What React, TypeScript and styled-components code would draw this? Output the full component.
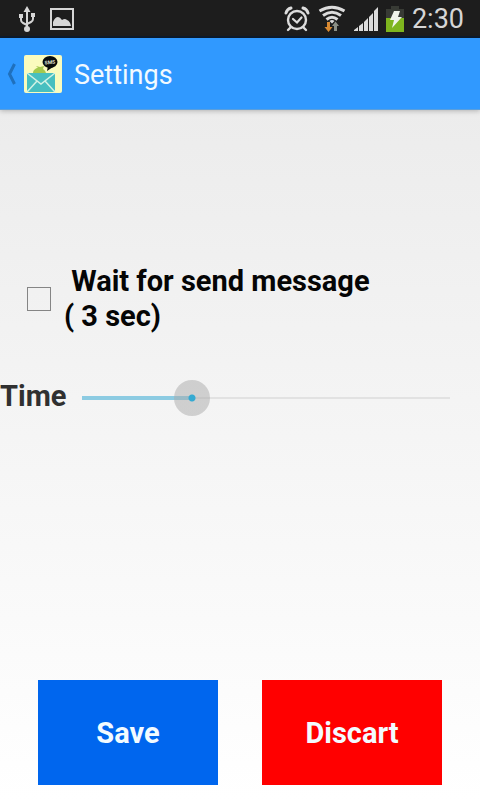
import React, { useState } from "react";
import styled, { createGlobalStyle } from "styled-components";

const GlobalStyle = createGlobalStyle`
  * { box-sizing: border-box; }
  body { margin: 0; font-family: Roboto, "Noto Sans", sans-serif; }
`;

const Screen = styled.div`
  display: flex;
  flex-direction: column;
  min-height: 100vh;
  background: linear-gradient(#e9e9e9, #ffffff);
`;

const StatusBar = styled.div`
  display: flex;
  align-items: center;
  justify-content: space-between;
  height: 38px;
  padding: 2px 16px 0 18px;
  background: #1d1d1d;
  border-bottom: 2px solid #0c1c30;
  color: #d6d6d6;
`;

const StatusGroup = styled.div<{ $gap: number }>`
  display: flex;
  align-items: center;
  gap: ${(p) => p.$gap}px;

  svg { display: block; }
`;

const Clock = styled.time`
  font-size: 27px;
  line-height: 34px;
`;

const ActionBar = styled.header`
  display: flex;
  align-items: center;
  height: 72px;
  padding: 0 6px;
  background: #3099ff;
  border-bottom: 1px solid #5b9fdc;
  box-shadow: 0 1px 5px rgba(0, 0, 0, 0.25);
`;

const UpLink = styled.a`
  display: flex;
  align-items: center;
  gap: 6px;

  svg { display: block; }
`;

const Title = styled.h1`
  margin: 2px 0 0 12px;
  color: #f2faff;
  font-size: 27px;
  line-height: 32px;
  font-weight: 400;
`;

const Content = styled.main`
  display: flex;
  flex: 1;
  flex-direction: column;
  padding: 154px 0 15px;
`;

const CheckRow = styled.label`
  display: flex;
  align-items: center;
  gap: 13px;
  padding: 0 96px 0 27px;
  color: #050505;
  font-size: 29px;
  line-height: 35px;
  font-weight: 700;
`;

const CheckText = styled.span`
  white-space: pre-wrap;
`;

const CheckBox = styled.input`
  appearance: none;
  flex: none;
  width: 24px;
  height: 24px;
  margin: 0;
  border: 1px solid #858585;
  background: transparent;

  &:checked { background: #33b5e5; }
`;

const SliderRow = styled.div`
  display: flex;
  align-items: center;
  margin-top: 42px;
  padding-right: 12px;
`;

const SliderLabel = styled.label`
  width: 64px;
  color: #303030;
  font-size: 29px;
  line-height: 36px;
  font-weight: 700;
`;

const Slider = styled.input`
  appearance: none;
  flex: 1;
  min-width: 0;
  height: 36px;
  margin: 4px 0 0;
  background: transparent;

  &::-webkit-slider-runnable-track {
    height: 36px;
    background:
      linear-gradient(#8ccbe2, #8ccbe2) 18px center / calc((100% - 36px) * var(--fill)) 4px no-repeat,
      linear-gradient(#e2e2e2, #e2e2e2) 18px center / calc(100% - 36px) 2px no-repeat;
  }

  &::-webkit-slider-thumb {
    appearance: none;
    width: 36px;
    height: 36px;
    border-radius: 50%;
    background: radial-gradient(circle, #35aad2 3px, rgba(170, 170, 170, 0.5) 4px);
  }
`;

const Actions = styled.div`
  display: grid;
  grid-template-columns: 1fr 1fr;
  gap: 44px;
  margin-top: auto;
  padding: 0 38px;
`;

const ActionButton = styled.button<{ $color: string }>`
  height: 105px;
  padding: 2px 0 0;
  border: 0;
  background: ${(p) => p.$color};
  color: #f3fbff;
  font: 700 29px/35px Roboto, "Noto Sans", sans-serif;
`;

const UsbIcon = () => (
  <svg width="18" height="26" viewBox="0 0 18 26" fill="none" stroke="#d6d6d6" strokeWidth="2">
    <path d="M9 4v18M3 9v5q0 2 2 3l4 2M15 9v4q0 2-2 3l-4 2" />
    <path d="M9 0l3.5 6h-7zM1 8h4v4H1zM13 7h4v4h-4z" fill="#d6d6d6" stroke="none" />
    <circle cx="9" cy="23" r="3" fill="#d6d6d6" stroke="none" />
  </svg>
);

const PictureIcon = () => (
  <svg width="24" height="22" viewBox="0 0 24 22">
    <rect x="1" y="1" width="22" height="20" fill="none" stroke="#d6d6d6" strokeWidth="2" />
    <path d="M3 18v-4q2-5 5-5 2 0 4 3 3-2 5 0 3 1 4 6z" fill="#d6d6d6" />
  </svg>
);

const AlarmIcon = () => (
  <svg width="26" height="26" viewBox="0 0 26 26" fill="none" stroke="#dcdcdc" strokeLinecap="round">
    <circle cx="13" cy="14" r="9" strokeWidth="2.4" />
    <path d="M9 13l4 3.5 4.5-5" strokeWidth="2.2" />
    <path d="M2 7Q3 3 7 2M19 2Q23 3 24 7" strokeWidth="3" />
    <path d="M7 21l-3 3M19 21l3 3" strokeWidth="2.4" />
  </svg>
);

const WifiIcon = () => (
  <svg width="28" height="28" viewBox="0 0 28 28" fill="none">
    <g stroke="#dcdcdc" strokeWidth="3">
      <path d="M1.5 6Q14-1.5 26.5 6" />
      <path d="M5 10.5Q14 4 23 10.5" />
      <path d="M8.5 14.5Q14 10 19.5 14.5" />
    </g>
    <path d="M11.5 16Q14 14 16.5 16L14 18.5z" fill="#dcdcdc" />
    <path d="M9 17h3v5h2.5l-4 5-4-5H9z" fill="#d98a32" />
    <path d="M16 26v-5h-2l3.5-4.5 3.5 4.5h-2v5z" fill="#8b8f86" />
  </svg>
);

const SignalIcon = () => (
  <svg width="24" height="24" viewBox="0 0 24 24" fill="#dcdcdc">
    <path d="M0 24v-1l4-3v4zM5 24v-5l4-3v8zM10 24v-9l4-4v13zM15 24V10l4-4v18zM20 24V4l4-4v24z" />
  </svg>
);

const BatteryIcon = () => (
  <svg width="18" height="26" viewBox="0 0 18 26">
    <path d="M5 0h8v3h5v9H0V3h5z" fill="#383b35" />
    <path d="M0 12h18v14H0z" fill="#7eb51e" />
    <path d="M8 5h6l-2 6h4L6 22l2-8H4z" fill="#f0f3ea" />
  </svg>
);

const BackIcon = () => (
  <svg width="12" height="24" viewBox="0 0 12 24" fill="none">
    <path d="M8.5 2L3.5 12l5 10" stroke="#1f70bd" strokeWidth="3" />
  </svg>
);

const AppIcon = () => (
  <svg width="38" height="38" viewBox="0 0 38 38">
    <rect width="38" height="38" rx="2" fill="#fafbbd" />
    <path d="M9 18c0-3 3-5 5-5l-2-2 4 1 4-1-1 3c2 1 3 3 3 5z" fill="#a5c94e" />
    <path d="M3 18h28v19H3z" fill="#48bfc0" />
    <path d="M3 18l14 11 14-11M3 37l10-11M31 37L21 26" fill="none" stroke="#d3f2e4" strokeWidth="1.5" />
    <ellipse cx="26" cy="7" rx="7.5" ry="6" fill="#080c0b" />
    <path d="M24 11l-1 5 6-4z" fill="#080c0b" />
    <text x="26" y="9" textAnchor="middle" fontSize="5" fontWeight="700" fontFamily="Roboto" fill="#e4e4d8" transform="rotate(-6 26 8)">SMS</text>
  </svg>
);

export default function App() {
  const [seconds, setSeconds] = useState(3);
  const [wait, setWait] = useState(false);

  return (
    <Screen>
      <GlobalStyle />
      <StatusBar>
        <StatusGroup $gap={14}>
          <UsbIcon />
          <PictureIcon />
        </StatusGroup>
        <StatusGroup $gap={8}>
          <AlarmIcon />
          <WifiIcon />
          <SignalIcon />
          <BatteryIcon />
          <Clock>2:30</Clock>
        </StatusGroup>
      </StatusBar>
      <ActionBar>
        <UpLink href="#" aria-label="Back">
          <BackIcon />
          <AppIcon />
        </UpLink>
        <Title>Settings</Title>
      </ActionBar>
      <Content>
        <CheckRow>
          <CheckBox type="checkbox" checked={wait} onChange={(e) => setWait(e.target.checked)} />
          <CheckText>{` Wait for send message (\u00a0${seconds} sec)`}</CheckText>
        </CheckRow>
        <SliderRow>
          <SliderLabel htmlFor="time">Time</SliderLabel>
          <Slider
            id="time"
            type="range"
            min={0}
            max={10}
            value={seconds}
            onChange={(e) => setSeconds(Number(e.target.value))}
            style={{ "--fill": seconds / 10 } as React.CSSProperties}
          />
        </SliderRow>
        <Actions>
          <ActionButton type="button" $color="#0066ee">Save</ActionButton>
          <ActionButton type="button" $color="#ff0000">Discart</ActionButton>
        </Actions>
      </Content>
    </Screen>
  );
}
